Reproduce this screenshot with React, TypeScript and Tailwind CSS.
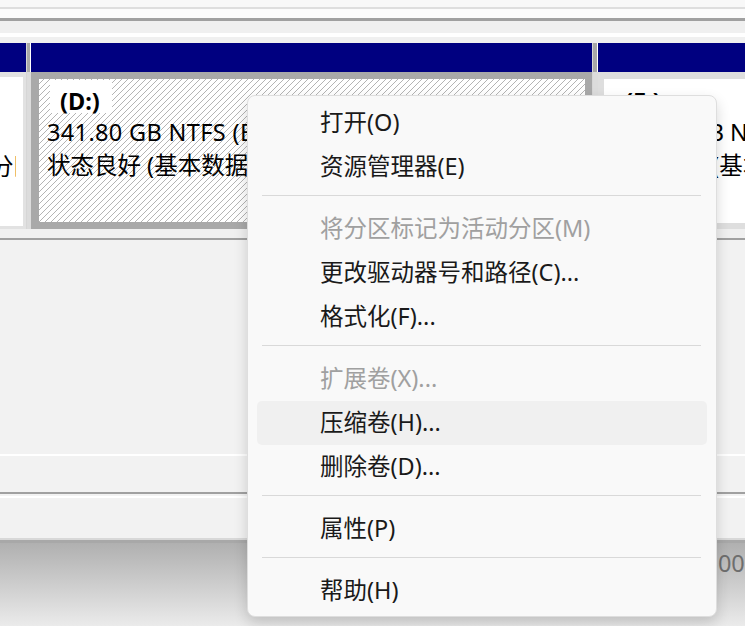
import React from "react";

type Item = { label: string; disabled?: boolean; hover?: boolean } | "sep";

const items: Item[] = [
  { label: "打开(O)" },
  { label: "资源管理器(E)" },
  "sep",
  { label: "将分区标记为活动分区(M)", disabled: true },
  { label: "更改驱动器号和路径(C)..." },
  { label: "格式化(F)..." },
  "sep",
  { label: "扩展卷(X)...", disabled: true },
  { label: "压缩卷(H)...", hover: true },
  { label: "删除卷(D)..." },
  "sep",
  { label: "属性(P)" },
  "sep",
  { label: "帮助(H)" },
];

function ColGap({ w }: { w: string }) {
  return (
    <div className={`${w} flex flex-col`}>
      <div className="h-[29px] bg-[#a8a8a8] border-l border-[#d6d6d6] border-r border-r-white" />
      <div className="flex-1 bg-[#dcdcdc] border-l border-[#d6d6d6]" />
    </div>
  );
}

export default function App() {
  return (
    <div className="relative w-[745px] h-[626px] overflow-hidden bg-[#f0f0f0] font-['Noto_Sans','Noto_Sans_CJK_SC',sans-serif] text-black">
      {/* top strips */}
      <div className="h-[7px] bg-[#f8f8f8]" />
      <div className="h-[2px] bg-[#dedede]" />
      <div className="h-[9px] bg-[#fbfbfb]" />
      <div className="h-[3px] bg-[#a0a0a0]" />
      <div className="h-[12px] bg-[#f0f0f0]" />
      <div className="h-[4px] bg-white" />
      <div className="h-[6px] bg-[#f0f0f0]" />

      {/* disk row */}
      <div className="flex h-[186px]">
        {/* partition 1 (clipped) */}
        <div className="w-[26px] flex flex-col">
          <div className="h-[29px] bg-[#000080]" />
          <div className="flex-1 bg-[#e2e2e2] pt-[5px] pb-[3px] pr-[3px]">
            <div className="h-full bg-white overflow-hidden">
              <div className="mt-[72.5px] h-[33px] w-[16px] overflow-hidden whitespace-nowrap text-[23.5px] leading-[33px]">
                <span className="inline-block ml-[-10px]">分区)</span>
              </div>
            </div>
          </div>
        </div>

        <ColGap w="w-[5px]" />

        {/* D: */}
        <div className="w-[561px] flex flex-col">
          <div className="h-[29px] bg-[#000080]" />
          <div className="flex-1 bg-[#a9a9a9] pl-[8px] pr-[7px] py-[7px]">
            <div className="h-full overflow-hidden bg-[image:repeating-linear-gradient(135deg,#ffffff_0px,#ffffff_3.2px,#b4b4b4_3.2px,#b4b4b4_4.24px)] pl-[8px] pt-[1px] whitespace-nowrap text-[23.5px]">
              <div className="h-[33px]">
                <span className="inline-block h-[33px] ml-[3px] pl-[10px] pr-[12px] bg-white font-bold leading-[42px]">
                  (D:)
                </span>
              </div>
              <div className="mt-[3px] leading-[33px] tracking-[0.35px]">341.80 GB NTFS (BitLocker 已加密)</div>
              <div className="leading-[33px]">状态良好 (基本数据分区)</div>
            </div>
          </div>
        </div>

        <ColGap w="w-[6px]" />

        {/* E: */}
        <div className="flex-1 flex flex-col min-w-0">
          <div className="h-[29px] bg-[#000080]" />
          <div className="flex-1 bg-[#dedede] pl-[6px] pt-[7px] pb-[6px]">
            <div className="h-full overflow-hidden bg-white pl-[8px] pt-[1px] whitespace-nowrap text-[23.5px]">
              <div className="h-[33px]">
                <span className="inline-block h-[33px] ml-[3px] pl-[10px] pr-[12px] bg-white font-bold leading-[42px]">
                  (E:)
                </span>
              </div>
              <div className="mt-[3px] leading-[33px]">465.76 GB NTFS</div>
              <div className="leading-[33px]">状态良好 (基本数据分区)</div>
            </div>
          </div>
        </div>
      </div>

      {/* lower panels */}
      <div className="h-[9px] bg-[#f0f0f0]" />
      <div className="h-[2px] bg-[#a0a0a0]" />
      <div className="h-[214px] bg-[#f2f2f2]" />
      <div className="h-[2px] bg-white" />
      <div className="h-[36px] bg-[#f2f2f2]" />
      <div className="h-[2px] bg-[#a0a0a0]" />
      <div className="h-[2px] bg-[#f2f2f2]" />
      <div className="h-[2px] bg-white" />
      <div className="h-[40px] bg-[#f2f2f2]" />
      <div className="h-[2px] bg-[#d8d8d8]" />
      <div className="h-[3px] bg-[#a8a8a8]" />
      <div className="h-[83px] bg-gradient-to-b from-[#b0b0b0] to-[#ebebeb]">
        <div className="pl-[691px] leading-[40px] text-[23.5px] text-[#6e6e6e] whitespace-nowrap">
          1500 MB
        </div>
      </div>

      {/* context menu */}
      <div className="absolute left-[247px] top-[95px] w-[470px] h-[522px] rounded-[8px] bg-[#f9f9f9] border border-[#dedede] shadow-[0_6px_14px_rgba(0,0,0,0.16)] pt-[5px] px-[9px]">
        {items.map((it, i) =>
          it === "sep" ? (
            <div key={i} className="h-[18px] pt-[6px]">
              <div className="h-[1px] ml-[5px] mr-[6px] bg-[#d9d9d9]" />
            </div>
          ) : (
            <div
              key={i}
              className={`h-[44px] flex items-center pl-[63px] rounded-[5px] text-[23.5px] whitespace-nowrap ${
                it.hover ? "bg-[#f0f0f0]" : ""
              } ${it.disabled ? "text-[#a0a0a0]" : "text-[#1a1a1a]"}`}
            >
              {it.label}
            </div>
          )
        )}
      </div>
    </div>
  );
}
